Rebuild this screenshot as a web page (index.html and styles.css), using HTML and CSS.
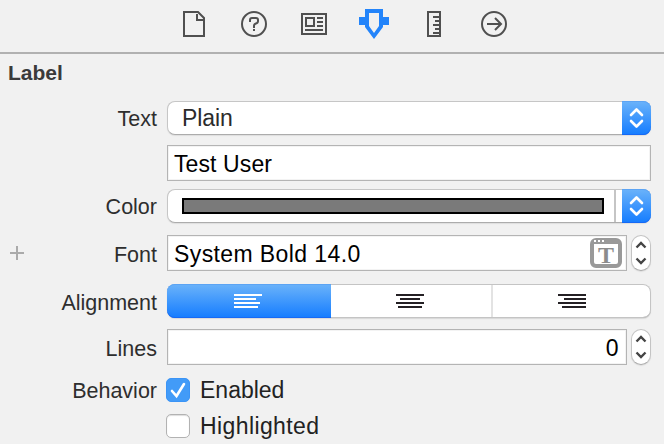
FILE: index.html
```html
<!DOCTYPE html>
<html lang="en">
<head>
<meta charset="utf-8">
<title>Attributes Inspector</title>
<link rel="stylesheet" href="styles.css">
</head>
<body>
<nav class="tabs">
  <svg class="icon" viewBox="0 0 30 30"><path d="M5 3H19L25 9V27H5ZM18 5V11H24"/></svg>
  <svg class="icon" viewBox="0 0 30 30"><circle cx="15" cy="15" r="12"/><path d="M11 13V11Q11 9 13 9H17Q19 9 19 11V12Q19 14 17 14.5Q15 15 15 17V19M15 20V22"/></svg>
  <svg class="icon" viewBox="0 0 30 30"><path d="M3 5H27V25H3ZM7 9H15V17H7ZM18 9H24M18 13H24M18 17H24M6 21H24"/></svg>
  <svg class="icon selected" viewBox="0 0 30 30"><path fill-rule="evenodd" d="M6 0H24V8H30V16H24V18L15 30L6 18V16H0V8H6ZM10 4V17L15 24L20 17V4Z"/></svg>
  <svg class="icon" viewBox="0 0 30 30"><path d="M9 3H21V27H9ZM14 8H20M16 12H20M14 16H20M16 20H20M14 24H20"/></svg>
  <svg class="icon" viewBox="0 0 30 30"><circle cx="15" cy="15" r="12"/><path d="M8 15H22M16 9L22 15L16 21"/></svg>
</nav>
<main class="inspector">
  <h1 class="title">Label</h1>

  <div class="row row-text">
    <span class="name">Text</span>
    <div class="popup"><span class="value">Plain</span>
      <span class="handle"><svg viewBox="0 0 29 34"><path d="M9 14L14.5 8.5L20 14M9 20L14.5 25.5L20 20"/></svg></span></div>
  </div>
  <div class="row row-value">
    <div class="field">Test User</div>
  </div>
  <div class="row row-color">
    <span class="name">Color</span>
    <div class="popup"><span class="swatch"></span><span class="rule"></span>
      <span class="handle"><svg viewBox="0 0 29 34"><path d="M9 14L14.5 8.5L20 14M9 20L14.5 25.5L20 20"/></svg></span></div>
  </div>
  <div class="row row-font">
    <span class="add"></span>
    <span class="name">Font</span>
    <div class="field">System Bold 14.0<span class="font-button"><i></i><i></i><i></i><b>T</b></span></div>
    <div class="stepper"><svg viewBox="0 0 20 36"><path d="M5.5 12.5L10 8L14.5 12.5M5.5 23.5L10 28L14.5 23.5"/></svg></div>
  </div>
  <div class="row row-align">
    <span class="name">Alignment</span>
    <div class="segments">
      <span class="segment on"><svg viewBox="0 0 28 14"><path d="M0 1H28M0 5H22M0 9H26M0 13H24"/></svg></span>
      <span class="segment"><svg viewBox="0 0 28 14"><path d="M0 1H28M4 5H24M0 9H28M2 13H26"/></svg></span>
      <span class="segment"><svg viewBox="0 0 28 14"><path d="M0 1H28M6 5H28M0 9H28M4 13H28"/></svg></span>
    </div>
  </div>
  <div class="row row-lines">
    <span class="name">Lines</span>
    <div class="field number">0</div>
    <div class="stepper"><svg viewBox="0 0 20 36"><path d="M5.5 12.5L10 8L14.5 12.5M5.5 23.5L10 28L14.5 23.5"/></svg></div>
  </div>
  <div class="row row-check">
    <span class="name">Behavior</span>
    <span class="check on"><svg viewBox="0 0 24 24"><path d="M6 13L10.5 18L18 6"/></svg></span>
    <span class="option">Enabled</span>
  </div>
  <div class="row row-check">
    <span class="check"></span>
    <span class="option">Highlighted</span>
  </div>
</main>
</body>
</html>
```
FILE: styles.css
```css
* { box-sizing: border-box; }
body {
  margin: 0;
  width: 664px;
  height: 444px;
  overflow: hidden;
  background: #f1f1f1;
  color: #2b2b2b;
  font-family: "Liberation Sans", Arial, sans-serif;
}
svg { display: block; fill: none; }
.tabs {
  height: 54px;
  padding: 9px 0 0 179px;
  display: flex;
  gap: 30px;
  border-bottom: 2px solid #b1b1b1;
}
.icon { width: 30px; height: 30px; stroke: #505050; stroke-width: 2; }
.icon.selected { fill: #2384fa; stroke: none; }

.title {
  margin: 0;
  height: 47px;
  padding: 7px 0 0 8px;
  font-size: 21px;
  line-height: 24px;
  font-weight: bold;
  color: #3a3a3a;
}
.row {
  display: grid;
  grid-template-columns: 157px 10px 460px 20px;
  position: relative;
}
.row > .name {
  grid-area: 1 / 1;
  text-align: right;
  font-size: 21.5px;
  color: #2e2e2e;
}
.row > .popup, .row > .segments, .row-value > .field { grid-area: 1 / 3 / 2 / 6; width: 484px; }
.row > .field { grid-row: 1; grid-column-start: 3; }
.row > .stepper { grid-area: 1 / 4; margin-left: 4px; }

.row-text { height: 34px; margin-bottom: 10px; line-height: 36px; }
.row-value { height: 36px; margin-bottom: 8px; }
.row-color { height: 34px; margin-bottom: 12px; line-height: 36px; }
.row-font { height: 36px; margin-bottom: 13px; line-height: 40px; }
.row-align { height: 34px; margin-bottom: 11px; line-height: 38px; }
.row-lines { height: 36px; margin-bottom: 13px; line-height: 40px; }
.row-check { height: 24px; margin-bottom: 12px; line-height: 26px; }

.popup {
  display: flex;
  height: 34px;
  border: 1px solid #c6c6c6;
  border-bottom-color: #acacac;
  border-radius: 8px;
  background: #fff;
  box-shadow: 0 1px 1px #dedede;
}
.value { flex: 1; padding-left: 14px; font-size: 23px; line-height: 33px; letter-spacing: -0.1px; }
.handle {
  width: 29px;
  height: 34px;
  margin: -1px -1px 0 0;
  border-radius: 0 8px 8px 0;
  background: linear-gradient(#6bb3fa, #147cff);
  box-shadow: inset 0 1px #5ca4f4, inset 0 -1px #1669f5;
}
.handle svg { width: 29px; height: 34px; stroke: #fff; stroke-width: 2.6; stroke-linecap: round; stroke-linejoin: round; }
.swatch { width: 422px; height: 16px; margin: 8px 10px 0 14px; border: 2px solid #000; background: #7a7a7a; }
.rule { width: 2px; margin-right: 6px; background: #c5c5c5; }

.field {
  display: flex;
  justify-content: space-between;
  height: 36px;
  padding: 0 4px 0 6px;
  border: 1px solid #b4b4b4;
  background: #fff;
  box-shadow: inset 0 0 0 1px #f3f3f3;
  color: #000;
  font-size: 23px;
  line-height: 36px;
  letter-spacing: 0.4px;
}
.row-value > .field { letter-spacing: 0.1px; }
.field.number { justify-content: flex-end; padding-right: 7px; }
.font-button {
  position: relative;
  width: 32px;
  height: 30px;
  margin-top: 2px;
  border: 4px solid #999;
  border-top-width: 6px;
  border-radius: 6px;
  background: #fff;
}
.font-button b {
  position: absolute;
  inset: 0;
  font: bold 24px/22px "Liberation Serif", serif;
  color: #8c8c8c;
  text-align: center;
  letter-spacing: 0;
}
.font-button i { position: absolute; top: -4px; left: 0; width: 2px; height: 2px; background: #fff; }
.font-button i:nth-child(2) { left: 4px; }
.font-button i:nth-child(3) { left: 8px; }
.stepper {
  width: 20px;
  height: 36px;
  border: 1px solid #c4c4c4;
  border-bottom-color: #aaa;
  border-radius: 10px;
  background: #fff;
  box-shadow: 0 1px 1px #ddd;
}
.stepper svg { width: 20px; height: 36px; margin: -1px; stroke: #444; stroke-width: 2.4; }

.add {
  position: absolute;
  left: 10px;
  top: 11px;
  width: 14px;
  height: 14px;
  background: linear-gradient(#aaa, #aaa) center / 14px 2px no-repeat, linear-gradient(#aaa, #aaa) center / 2px 14px no-repeat;
}

.segments {
  display: grid;
  grid-template-columns: 164px 162px 158px;
  height: 34px;
  border-radius: 8px;
  background: #fff;
  box-shadow: inset 0 0 0 1px #c4c4c4, inset 0 -1px #aaa, 0 1px 1px #d8d8d8;
}
.segment { display: flex; padding: 10px 0 0 65px; }
.segment + .segment { padding-left: 65px; border-right: 2px solid #e3e3e3; margin: 1px 0; padding-top: 9px; }
.segment:last-child { border: 0; }
.segment svg { width: 28px; height: 14px; stroke: #242024; stroke-width: 2; }
.segment.on {
  padding-left: 67px;
  border-radius: 8px 0 0 8px;
  background: linear-gradient(#6bb3fa, #147cff);
  box-shadow: inset 0 1px #5ca4f4, inset 0 -1px #1669f5;
}
.segment.on svg { stroke: #fff; }

.check {
  grid-area: 1 / 3;
  width: 24px;
  height: 24px;
  margin-left: -1px;
  border: 1px solid #b2b2b2;
  border-radius: 5px;
  background: #fff;
  box-shadow: inset 0 1px 1px #ddd;
}
.check.on { border-color: #3b94f6; background: #429bf8; box-shadow: none; }
.check svg { width: 24px; height: 24px; margin: -1px; stroke: #fff; stroke-width: 2.6; stroke-linecap: round; }
.option { grid-area: 1 / 3; padding-left: 33px; font-size: 23px; line-height: 25px; color: #222; }
.row-check:last-child .option { letter-spacing: 0.4px; }
```
